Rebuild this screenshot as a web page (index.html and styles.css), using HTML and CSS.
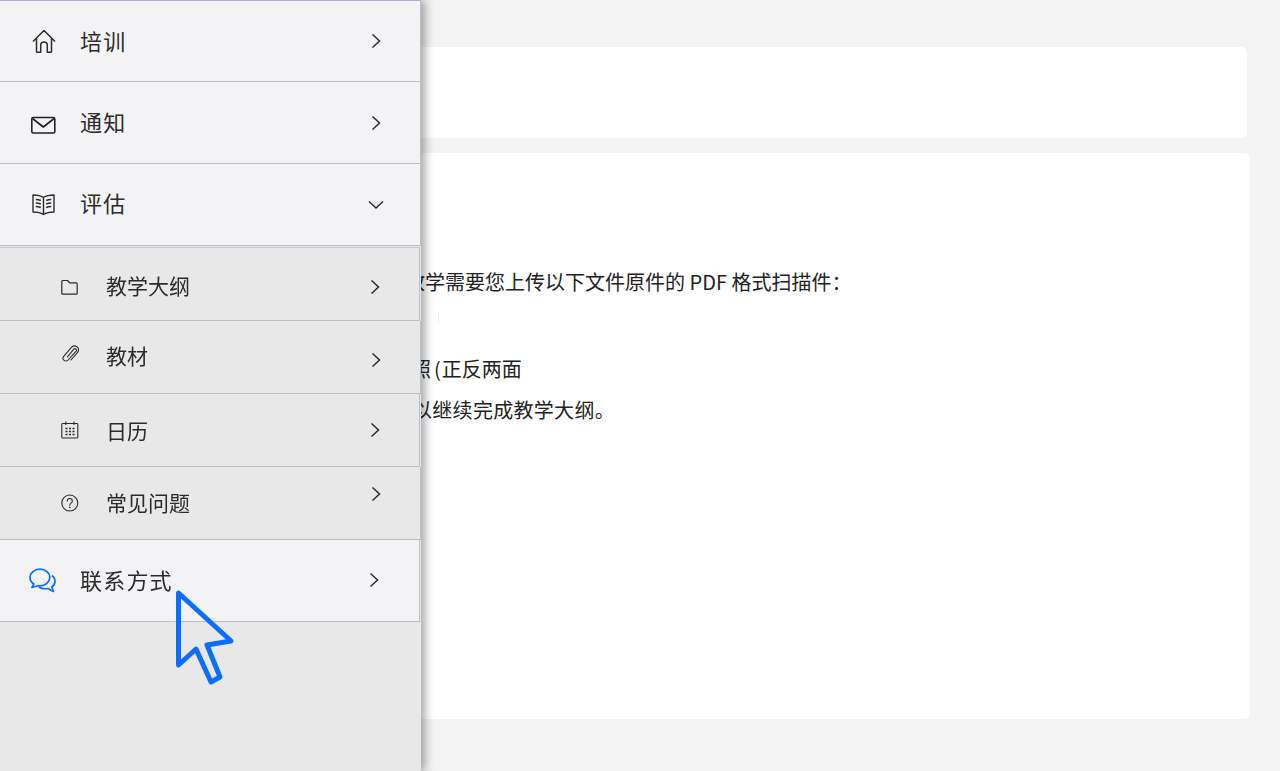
FILE: index.html
```html
<!DOCTYPE html>
<html lang="zh-CN">
<head>
    <meta charset="UTF-8">
    <meta name="viewport" content="width=device-width, initial-scale=1.0">
    <title>评估</title>
    <link rel="stylesheet" href="styles.css">
</head>
<body>
    <!-- Main Content -->
    <main class="main">
        <div class="card card-top"></div>
        <div class="card card-body">
            <p class="line line-intro">教学需要您上传以下文件原件的 PDF 格式扫描件：</p>
            <div class="faint-mark"></div>
            <p class="line line-photo">照<span class="paren">(</span>正反两面</p>
            <p class="line line-next">以继续完成教学大纲。</p>
        </div>
    </main>

    <!-- Side Menu -->
    <nav class="side-menu">
        <a class="row row-main row-first">
            <svg class="icon" viewBox="0 0 28 24" fill="none" stroke="#2b2b2b" stroke-width="1.5" stroke-linejoin="round"><path d="M4 12.500 15 1.500l11 11M7.500 9.500v13a.8.800 0 0 0 .8.800h3.400v-7a3.300 3.300 0 0 1 6.600 0v7h3.400a.8.800 0 0 0 .8-.800v-13"/></svg>
            <span class="label">培训</span>
            <svg class="chevron" viewBox="0 0 16 16" fill="none" stroke="#2b2b2b" stroke-width="1.500"><path d="m4.500 1.500 7 6.500-7 6.500"/></svg>
        </a>
        <a class="row row-main">
            <svg class="icon" viewBox="0 0 28 24" fill="none" stroke="#222" stroke-width="1.600" stroke-linejoin="round"><rect x="2.800" y="6.500" width="23" height="15.500" rx="1.500"/><path d="m3.500 7.500 10.800 8.500 10.800-8.500"/></svg>
            <span class="label">通知</span>
            <svg class="chevron" viewBox="0 0 16 16" fill="none" stroke="#2b2b2b" stroke-width="1.500"><path d="m4.500 1.500 7 6.500-7 6.500"/></svg>
        </a>
        <a class="row row-main row-open">
            <svg class="icon" viewBox="0 0 28 24" fill="none" stroke="#2b2b2b" stroke-width="1.400" stroke-linejoin="round"><path d="M14.500 5.500C11.500 3.500 8 3 4 3v17c4 0 7.500.5 10.500 2.500 3-2 6.500-2.500 10.500-2.500V3c-4 0-7.500.5-10.500 2.500ZM14.500 5.500v17M6.800 7.500c1.500 0 3.500.3 5 1M6.800 11c1.500 0 3.500.3 5 1M6.800 14.500c1.500 0 3.500.3 5 1M22.200 7.500c-1.500 0-3.500.3-5 1M22.200 11c-1.500 0-3.500.3-5 1M22.200 14.500c-1.500 0-3.500.3-5 1"/></svg>
            <span class="label">评估</span>
            <svg class="chevron" viewBox="0 0 16 16" fill="none" stroke="#2b2b2b" stroke-width="1.500"><path d="m1 4.500 7 6.500 7-6.500"/></svg>
        </a>

        <a class="row row-sub row-syllabus">
            <svg class="icon" viewBox="0 0 18 18" fill="none" stroke="#2b2b2b" stroke-width="1.200" stroke-linejoin="round"><path d="M.8 15.500V3.500a1 1 0 0 1 1-1h4.800l2 2.300h6.600a1 1 0 0 1 1 1v9.700a.6.600 0 0 1-.6.600H1.400a.6.600 0 0 1-.6-.6Z"/></svg>
            <span class="label">教学大纲</span>
            <svg class="chevron" viewBox="0 0 16 16" fill="none" stroke="#2b2b2b" stroke-width="1.500"><path d="m4.500 1.500 7 6.500-7 6.500"/></svg>
        </a>
        <a class="row row-sub row-books">
            <svg class="icon" viewBox="0 0 18 18" fill="none" stroke="#2b2b2b" stroke-width="1.100" stroke-linecap="round"><path d="M6.500 11.800 12.800 4.200a1.500 1.500 0 0 1 2.300 2L7.200 15a2.900 2.900 0 0 1-4.500-3.700L10.800 2a4 4 0 0 1 6 5.200L10 15"/></svg>
            <span class="label">教材</span>
            <svg class="chevron" viewBox="0 0 16 16" fill="none" stroke="#2b2b2b" stroke-width="1.500"><path d="m4.500 1.500 7 6.500-7 6.500"/></svg>
        </a>
        <a class="row row-sub row-calendar">
            <svg class="icon" viewBox="0 0 18 18" fill="none" stroke="#2b2b2b" stroke-width="1.100"><rect x=".8" y="2.500" width="16" height="14.500" rx=".8"/><path d="M4.800.4v3.600M13 .4v3.600"/><path d="M4.500 7.500h2M8 7.500h2M11.500 7.500h2M4.500 10.500h2M8 10.500h2M11.500 10.500h2M4.500 13.500h2M8 13.500h2M11.500 13.500h2" stroke-width="1.700"/></svg>
            <span class="label">日历</span>
            <svg class="chevron" viewBox="0 0 16 16" fill="none" stroke="#2b2b2b" stroke-width="1.500"><path d="m4.500 1.500 7 6.500-7 6.500"/></svg>
        </a>
        <a class="row row-sub row-faq">
            <svg class="icon" viewBox="0 0 18 18" fill="none" stroke="#2b2b2b" stroke-width="1.100"><circle cx="8.800" cy="9" r="8"/><path d="M6.300 7a2.500 2.500 0 1 1 3.800 2.100C9.200 9.700 8.800 10.200 8.800 11.200" stroke-linecap="round"/><circle cx="8.800" cy="13.400" r=".8" fill="#2b2b2b" stroke="none"/></svg>
            <span class="label">常见问题</span>
            <svg class="chevron" viewBox="0 0 16 16" fill="none" stroke="#2b2b2b" stroke-width="1.500"><path d="m4.500 1.500 7 6.500-7 6.500"/></svg>
        </a>

        <a class="row row-main row-contact">
            <svg class="icon" viewBox="0 0 28 26" fill="none" stroke="#0d6efd" stroke-width="1.700" stroke-linejoin="round"><path d="M11 1.200C5.500 1.200 1 4.800 1 9.500c0 2.800 1.500 5 3.800 6.500L3 19.500l5.800-1.800c.7.100 1.500.2 2.200.2 5.500 0 9.800-3.700 9.800-8.400S16.500 1.200 11 1.200Z"/><path d="M23 7.500c1.800 1.500 3 3.300 3 5.800 0 2.400-1.200 4.400-3.200 5.700l1.700 4.500-5.700-3c-3 .5-6.500.2-9-1.500"/></svg>
            <span class="label">联系方式</span>
            <svg class="chevron" viewBox="0 0 16 16" fill="none" stroke="#2b2b2b" stroke-width="1.500"><path d="m4.500 1.500 7 6.500-7 6.500"/></svg>
        </a>
    </nav>

    <!-- Pointer drawn on top of the recording -->
    <svg class="pointer" viewBox="0 0 60 96" fill="none" stroke="#0d6efd" stroke-width="5" stroke-linejoin="round"><path d="M3.500 3 56 51 32 55 45 87 36 92 21 59 3.500 75Z"/></svg>
</body>
</html>
```

FILE: styles.css
```css
body {
    margin: 0;
    height: 771px;
    overflow: hidden;
    background-color: #f3f3f3;
    font-family: "Noto Sans CJK SC", "Noto Sans", sans-serif;
    color: #222;
}
.main {
    display: flex;
    flex-direction: column;
    gap: 15px;
    padding-top: 47px;
}
.card {
    background-color: #fff;
    border-radius: 5px;
}
.card-top {
    height: 91px;
    margin-right: 33px;
}
.card-body {
    height: 566px;
    margin-right: 30px;
    box-sizing: border-box;
    padding-top: 114px;
}
.line {
    margin: 0;
    font-size: 20px;
    line-height: 30px;
    white-space: nowrap;
}
.line-intro {
    padding-left: 405px;
}
.faint-mark {
    width: 1px;
    height: 12px;
    margin: 14px 0 0 438px;
    background-color: #efefef;
}
.line-photo {
    margin-top: 31px;
    padding-left: 411px;
}
.paren {
    margin: 0 1px 0 3px;
}
.line-next {
    margin-top: 11px;
    padding-left: 412px;
    letter-spacing: 0.3px;
}

.side-menu {
    position: fixed;
    top: 0;
    left: 0;
    bottom: 0;
    width: 421px;
    display: flex;
    flex-direction: column;
    background-color: #e8e8e8;
    box-shadow: 4px 0 9px rgba(0, 0, 0, 0.35);
}
.row {
    display: flex;
    align-items: center;
    box-sizing: border-box;
    border-bottom: 1px solid #b9bfca;
    border-right: 1px solid #b9bfca;
    color: #2b2b2b;
}
.row-main {
    height: 82px;
    padding: 0 36px 0 29px;
    background-color: #f3f3f6;
}
.row-first {
    border-top: 1px solid #a7b5cc;
}
.row-open {
    margin-bottom: 1px;
}
.row-sub {
    height: 73px;
    padding: 0 36px 0 61px;
    background-color: #e8e8e8;
}
.row-syllabus {
    width: 420px;
    height: 74px;
    border-top: 1px solid #c6c9cf;
}
.row-calendar {
    width: 420px;
}
.row-contact {
    width: 420px;
    padding-right: 37px;
}
.icon {
    flex: none;
}
.row-main .icon {
    width: 28px;
    height: 24px;
    margin-right: 23px;
}
.row-contact .icon {
    height: 26px;
}
.row-sub .icon {
    width: 18px;
    height: 18px;
    margin-right: 27px;
}
.label {
    line-height: 30px;
}
.row-main .label {
    font-size: 22px;
    letter-spacing: 1.200px;
    margin-bottom: 4px;
}
.row-first .label {
    margin-bottom: 2px;
}
.row-open .label {
    margin-bottom: 6px;
}
.row-open .icon {
    margin-bottom: 2px;
}
.row-sub .label {
    font-size: 21px;
}
.chevron {
    flex: none;
    width: 16px;
    height: 16px;
    margin-left: auto;
}
.row-contact .chevron {
    margin-bottom: 2px;
}
.row-syllabus .icon,
.row-syllabus .chevron {
    margin-top: 6px;
}
.row-syllabus .label {
    margin-top: 2px;
}
.row-books .icon {
    margin-bottom: 6px;
}
.row-books .label {
    margin-bottom: 4px;
}
.row-books .chevron {
    margin-top: 6px;
}
.row-faq .label {
    margin-bottom: 2px;
}
.row-faq .chevron {
    margin-bottom: 18px;
}

.pointer {
    position: fixed;
    top: 590px;
    left: 175px;
    width: 60px;
    height: 96px;
}
```
